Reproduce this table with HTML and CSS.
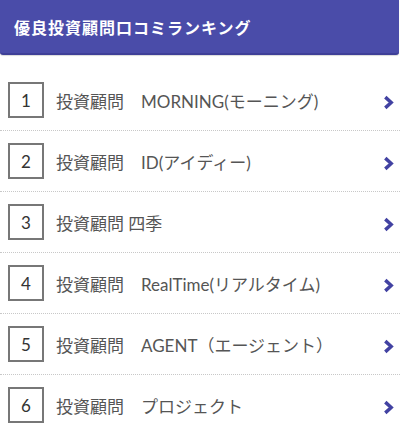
FILE: index.html
```html
<!DOCTYPE html>
<html lang="ja">
<head>
<meta charset="utf-8">
<link rel="stylesheet" href="styles.css">
</head>
<body>
<div class="ranking">
  <h2 class="title">優良投資顧問口コミランキング</h2>
  <ul class="list">
    <li class="item"><span class="rank">1</span><span class="name">投資顧問　MORNING(モーニング)</span><svg class="chev" viewBox="0 0 10 14"><polyline points="2,2 7.5,7 2,12"/></svg></li>
    <li class="item"><span class="rank">2</span><span class="name">投資顧問　ID(アイディー)</span><svg class="chev" viewBox="0 0 10 14"><polyline points="2,2 7.5,7 2,12"/></svg></li>
    <li class="item"><span class="rank">3</span><span class="name">投資顧問 四季</span><svg class="chev" viewBox="0 0 10 14"><polyline points="2,2 7.5,7 2,12"/></svg></li>
    <li class="item"><span class="rank">4</span><span class="name">投資顧問　RealTime(リアルタイム)</span><svg class="chev" viewBox="0 0 10 14"><polyline points="2,2 7.5,7 2,12"/></svg></li>
    <li class="item"><span class="rank">5</span><span class="name">投資顧問　AGENT（エージェント）</span><svg class="chev" viewBox="0 0 10 14"><polyline points="2,2 7.5,7 2,12"/></svg></li>
    <li class="item"><span class="rank">6</span><span class="name">投資顧問　プロジェクト</span><svg class="chev" viewBox="0 0 10 14"><polyline points="2,2 7.5,7 2,12"/></svg></li>
  </ul>
</div>
</body>
</html>
```
FILE: styles.css
```css
html, body {
  margin: 0;
  padding: 0;
  background: #fff;
}
body {
  font-family: Lato, "Noto Sans CJK JP", sans-serif;
  width: 400px;
  overflow: hidden;
}
.title {
  margin: 0 1px 0 0;
  height: 55px;
  box-sizing: border-box;
  padding-left: 14px;
  display: flex;
  align-items: center;
  background: #4a4ca9;
  color: #fff;
  font-family: "Noto Sans CJK JP", sans-serif;
  font-size: 16px;
  font-weight: 700;
  letter-spacing: 1px;
  border-bottom: 2px solid #3e3f97;
  border-radius: 0 0 3px 3px;
  box-shadow: 0 1px 1px rgba(0,0,0,0.15);
}
.list {
  list-style: none;
  margin: 15px 0 0;
  padding: 0;
}
.item {
  height: 60px;
  display: flex;
  align-items: center;
  border-bottom: 1px dotted #c8c8c8;
  padding-left: 8px;
  padding-right: 6px;
}
.rank {
  width: 36px;
  height: 36px;
  box-sizing: border-box;
  border: 2px solid #777;
  display: flex;
  align-items: center;
  justify-content: center;
  font-family: Lato, sans-serif;
  font-size: 17px;
  color: #333;
  flex-shrink: 0;
}
.name {
  margin-left: 12px;
  flex: 1;
  font-size: 17px;
  color: #555;
  white-space: nowrap;
}
.chev {
  width: 11px;
  height: 15px;
  margin-top: 4px;
  fill: none;
  stroke: #4242a2;
  stroke-width: 3.2;
}
```
